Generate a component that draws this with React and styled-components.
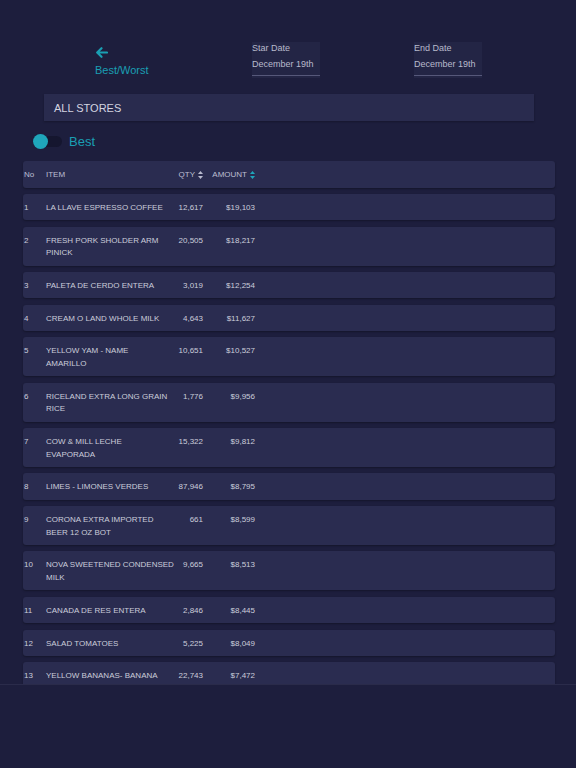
import React, { useState } from 'react';
import styled, { createGlobalStyle } from 'styled-components';

const GlobalStyle = createGlobalStyle`
  html, body {
    margin: 0;
    padding: 0;
    background: #1d1e3d;
    font-family: "Liberation Sans", Arial, sans-serif;
  }
`;

const Page = styled.div`
  width: 576px;
  height: 768px;
  background: #1d1e3d;
  overflow: hidden;
`;

const Header = styled.header`
  display: flex;
  align-items: flex-start;
  padding: 42px 0 0 95px;
  height: 52px;
`;

const BackLink = styled.a`
  display: flex;
  flex-direction: column;
  width: 157px;
  padding-top: 5px;
  color: #1a9fb3;
  font-size: 11px;
  text-decoration: none;
  cursor: pointer;

  svg {
    margin: 0 0 6px 1px;
  }
`;

const DateBox = styled.div`
  width: 68px;
  height: 36px;
  margin-right: ${({ gap }) => gap || 0}px;
  background: #232545;
  color: #b8bacc;
  font-size: 9px;
  line-height: 12px;
  position: relative;

  &:after {
    content: '';
    position: absolute;
    left: 0;
    right: 0;
    bottom: 2px;
    height: 1px;
    background: #56587a;
  }
`;

const DateLabel = styled.span`
  display: block;
`;

const DateValue = styled.span`
  display: block;
  margin-top: 4px;
`;

const StoreBar = styled.div`
  margin: 0 42px 0 44px;
  height: 27px;
  background: #292b4e;
  color: #d3d4e0;
  font-size: 11px;
  display: flex;
  align-items: center;
  padding-left: 10px;
  box-shadow: 0 1px 2px rgba(0, 0, 0, 0.25);
`;

const ToggleRow = styled.div`
  display: flex;
  align-items: center;
  gap: 7px;
  padding: 12px 0 0 33px;
  height: 16px;
`;

const Track = styled.button`
  position: relative;
  width: 29px;
  height: 11px;
  border: none;
  padding: 0;
  background: #15162f;
  border-radius: 6px;
  cursor: pointer;
`;

const Knob = styled.span`
  position: absolute;
  top: -2px;
  left: ${({ on }) => (on ? 14 : 0)}px;
  width: 15px;
  height: 15px;
  border-radius: 50%;
  background: #1fa6bb;
`;

const ToggleLabel = styled.span`
  color: #1a9fb3;
  font-size: 13px;
`;

const List = styled.div`
  margin-top: 12px;
  height: 523px;
  overflow: hidden;
  border-bottom: 1px solid #2a2b4a;
  display: flex;
  flex-direction: column;
  gap: 6.3px;
  padding: 0 21px 0 23px;
`;

const Row = styled.div`
  display: grid;
  grid-template-columns: 22px 132px 25px 52px;
  align-items: start;
  flex-shrink: 0;
  padding: 8px 0 6px 1px;
  background: #2a2c50;
  border-radius: 3px;
  box-shadow: 0 1px 2px rgba(0, 0, 0, 0.3);
  color: ${({ head }) => (head ? '#bdbfd2' : '#cbccdb')};
  font-size: 8px;
  line-height: 12.5px;
`;

const Cell = styled.span`
  text-align: ${({ right }) => (right ? 'right' : 'left')};
  white-space: nowrap;
`;

const Line = styled.span`
  display: block;
`;

const HeadCell = styled.span`
  display: flex;
  align-items: center;
  gap: 3px;
  white-space: nowrap;
  justify-content: ${({ right }) => (right ? 'flex-end' : 'flex-start')};
`;

const SortIcon = ({ color }) => (
  <svg width="5" height="8" viewBox="0 0 5 8">
    <path d="M2.5 0 L5 3 H0 Z" fill={color} />
    <path d="M2.5 8 L5 5 H0 Z" fill={color} />
  </svg>
);

const items = [
  [['LA LLAVE ESPRESSO COFFEE'], '12,617', '$19,103'],
  [['FRESH PORK SHOLDER ARM', 'PINICK'], '20,505', '$18,217'],
  [['PALETA DE CERDO ENTERA'], '3,019', '$12,254'],
  [['CREAM O LAND WHOLE MILK'], '4,643', '$11,627'],
  [['YELLOW YAM - NAME', 'AMARILLO'], '10,651', '$10,527'],
  [['RICELAND EXTRA LONG GRAIN', 'RICE'], '1,776', '$9,956'],
  [['COW & MILL LECHE', 'EVAPORADA'], '15,322', '$9,812'],
  [['LIMES - LIMONES VERDES'], '87,946', '$8,795'],
  [['CORONA EXTRA IMPORTED', 'BEER 12 OZ BOT'], '661', '$8,599'],
  [['NOVA SWEETENED CONDENSED', 'MILK'], '9,665', '$8,513'],
  [['CANADA DE RES ENTERA'], '2,846', '$8,445'],
  [['SALAD TOMATOES'], '5,225', '$8,049'],
  [['YELLOW BANANAS- BANANA'], '22,743', '$7,472'],
];

const App = () => {
  const [best, setBest] = useState(false);

  return (
    <Page>
      <GlobalStyle />
      <Header>
        <BackLink>
          <svg width="12" height="11" viewBox="0 0 12 11" fill="none" stroke="#1a9fb3" strokeWidth="2.2" strokeLinecap="round" strokeLinejoin="round">
            <path d="M11 5.5 H1.5 M5.5 1.2 L1.2 5.5 L5.5 9.8" />
          </svg>
          Best/Worst
        </BackLink>
        <DateBox gap={94}>
          <DateLabel>Star Date</DateLabel>
          <DateValue>December 19th</DateValue>
        </DateBox>
        <DateBox>
          <DateLabel>End Date</DateLabel>
          <DateValue>December 19th</DateValue>
        </DateBox>
      </Header>
      <StoreBar>ALL STORES</StoreBar>
      <ToggleRow>
        <Track onClick={() => setBest(!best)}>
          <Knob on={best ? 1 : 0} />
        </Track>
        <ToggleLabel>Best</ToggleLabel>
      </ToggleRow>
      <List>
        <Row head>
          <Cell>No</Cell>
          <Cell>ITEM</Cell>
          <HeadCell right>
            QTY <SortIcon color="#b9bbcf" />
          </HeadCell>
          <HeadCell right>
            AMOUNT <SortIcon color="#1fa6bb" />
          </HeadCell>
        </Row>
        {items.map(([lines, qty, amount], i) => (
          <Row key={lines[0]}>
            <Cell>{i + 1}</Cell>
            <Cell>
              {lines.map((l) => (
                <Line key={l}>{l}</Line>
              ))}
            </Cell>
            <Cell right>{qty}</Cell>
            <Cell right>{amount}</Cell>
          </Row>
        ))}
      </List>
    </Page>
  );
};

export default App;
